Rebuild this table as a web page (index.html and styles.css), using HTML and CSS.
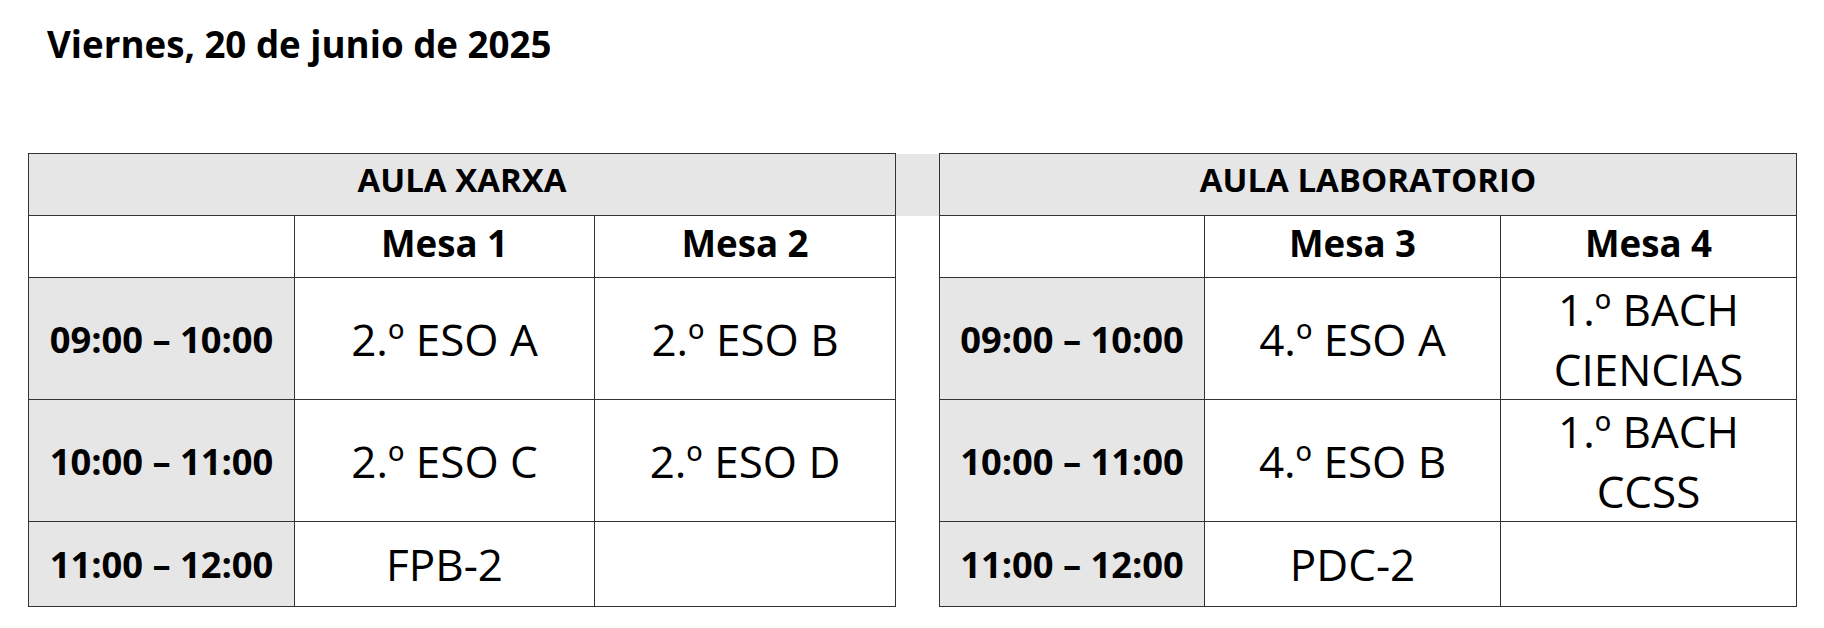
FILE: index.html
```html
<!DOCTYPE html>
<html lang="es">
<head>
<meta charset="utf-8">
<title>Horario</title>
<link rel="stylesheet" href="styles.css">
</head>
<body>
<div class="page">
  <h1 class="title">Viernes, 20 de junio de 2025</h1>
  <table class="schedule">
    <colgroup>
      <col class="c-time"><col class="c-mesa"><col class="c-mesa2">
      <col class="c-gap">
      <col class="c-time2"><col class="c-mesa3"><col class="c-mesa3">
    </colgroup>
    <tr class="r-room">
      <th class="room" colspan="3">AULA XARXA</th>
      <td class="gap gap-gray"></td>
      <th class="room" colspan="3">AULA LABORATORIO</th>
    </tr>
    <tr class="r-mesa">
      <td class="blank"></td>
      <th class="mesa">Mesa 1</th>
      <th class="mesa">Mesa 2</th>
      <td class="gap"></td>
      <td class="blank"></td>
      <th class="mesa">Mesa 3</th>
      <th class="mesa">Mesa 4</th>
    </tr>
    <tr class="r-tall">
      <th class="time">09:00 – 10:00</th>
      <td class="grp">2.º ESO A</td>
      <td class="grp">2.º ESO B</td>
      <td class="gap"></td>
      <th class="time">09:00 – 10:00</th>
      <td class="grp">4.º ESO A</td>
      <td class="grp">1.º BACH<br>CIENCIAS</td>
    </tr>
    <tr class="r-tall">
      <th class="time">10:00 – 11:00</th>
      <td class="grp">2.º ESO C</td>
      <td class="grp">2.º ESO D</td>
      <td class="gap"></td>
      <th class="time">10:00 – 11:00</th>
      <td class="grp">4.º ESO B</td>
      <td class="grp">1.º BACH<br>CCSS</td>
    </tr>
    <tr class="r-short">
      <th class="time">11:00 – 12:00</th>
      <td class="grp">FPB-2</td>
      <td class="grp"></td>
      <td class="gap"></td>
      <th class="time">11:00 – 12:00</th>
      <td class="grp">PDC-2</td>
      <td class="grp"></td>
    </tr>
  </table>
</div>
</body>
</html>
```

FILE: styles.css
```css
html, body {
  margin: 0;
  padding: 0;
  background: #ffffff;
}

.page {
  padding: 21px 0 0 28px;
  font-family: "Open Sans", "Noto Sans", sans-serif;
  color: #000;
}

.title {
  margin: 0 0 0 19px;
  font-size: 36.7px;
  line-height: 46px;
  font-weight: 700;
}

.schedule {
  margin-top: 86px;
  border-collapse: collapse;
  table-layout: fixed;
  width: 1768px;
}

.c-time { width: 266px; }
.c-mesa { width: 300px; }
.c-mesa2 { width: 301px; }
.c-gap { width: 44px; }
.c-time2 { width: 265px; }
.c-mesa3 { width: 296px; }

.schedule th,
.schedule td {
  border: 1px solid #333;
  padding: 0;
  text-align: center;
  vertical-align: middle;
}

.schedule td.gap {
  border-top: none;
  border-bottom: none;
  background: #fff;
}

.schedule td.gap-gray {
  background: #e6e6e6;
}

.r-room { height: 62px; }
.r-mesa { height: 62px; }
.r-tall { height: 122px; }
.r-short { height: 85px; }

.schedule .room {
  background: #e6e6e6;
  font-size: 33px;
  font-weight: 700;
  line-height: 44px;
  padding-bottom: 10px;
}

.schedule .mesa {
  font-size: 36.7px;
  font-weight: 700;
  line-height: 48px;
  padding-bottom: 8px;
}

.time {
  background: #e6e6e6;
  font-size: 36.3px;
  font-weight: 700;
}

.grp {
  font-size: 44px;
  font-weight: 400;
  line-height: 60px;
}
```
